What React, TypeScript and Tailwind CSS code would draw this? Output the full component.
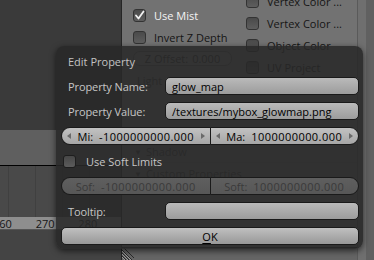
import React from "react";

const Check = () => (
  <svg width="11" height="11" viewBox="0 0 11 11" fill="none">
    <path
      d="M2 5.5 L4.5 8.5 L9.5 1.5"
      stroke="#f2f2f2"
      strokeWidth="1.8"
      strokeLinecap="round"
      strokeLinejoin="round"
    />
  </svg>
);

const Arrow = ({ dir }: { dir: "l" | "r" }) => (
  <svg width="4" height="6" viewBox="0 0 4 6">
    <path d={dir === "l" ? "M4 0 L0 3 L4 6 Z" : "M0 0 L4 3 L0 6 Z"} fill="#6a6a6a" />
  </svg>
);

const PanelCheck = ({
  label,
  checked,
  light,
}: {
  label: string;
  checked?: boolean;
  light?: boolean;
}) => (
  <div className="h-[22px] flex items-center gap-[8px]">
    <div className="w-[13px] h-[13px] rounded-[3px] border border-[#333] bg-gradient-to-b from-[#4a4a4a] to-[#5e5e5e] flex items-center justify-center">
      {checked && <Check />}
    </div>
    <span className={light ? "text-[#f4f4f4]" : "text-[#151515]"}>{label}</span>
  </div>
);

const Row = ({ label, children }: { label: string; children: React.ReactNode }) => (
  <div className="h-[18px] flex items-center">
    <div className="w-[104px] pl-[7px] text-[#c6c6c6] tracking-[-0.1px]">{label}</div>
    {children}
  </div>
);

const TextField = ({ value }: { value?: string }) => (
  <div className="flex-1 h-full rounded-[5px] border border-[#1a1a1a] bg-gradient-to-b from-[#bababa] to-[#9c9c9c] pl-[6px] flex items-center text-black">
    {value}
  </div>
);

const NumHalf = ({
  label,
  value,
  side,
  disabled,
}: {
  label: string;
  value: string;
  side: "l" | "r";
  disabled?: boolean;
}) => (
  <div
    className={
      "flex-1 h-full flex items-center px-[5px] border-y border-[#1a1a1a] " +
      (side === "l"
        ? "rounded-l-[9px] border-l "
        : "rounded-r-[9px] border-r border-l border-l-[#1a1a1a] ") +
      (disabled
        ? "bg-gradient-to-b from-[#5f5f5f] to-[#575757] text-[#3a3a3a]"
        : "bg-gradient-to-b from-[#c2c2c2] to-[#a6a6a6] text-black")
    }
  >
    <div className="w-[4px]">{!disabled && <Arrow dir="l" />}</div>
    <div className="flex-1 flex justify-center gap-[6px]">
      <span>{label}</span>
      <span className="tracking-[0.45px]">{value}</span>
    </div>
    <div className="w-[4px]">{!disabled && <Arrow dir="r" />}</div>
  </div>
);

export default function App() {
  return (
    <div className="relative w-[374px] h-[260px] overflow-hidden flex font-['Open_Sans',sans-serif] text-[11px] leading-none bg-[#3a3a3a]">
      {/* left editors */}
      <div className="w-[122px] flex flex-col border-r border-[#262626]">
        <div className="h-[130px] bg-[#3a3a3a]" />
        <div className="h-[36px] bg-[#5f5f5f] border-b border-black" />
        <div className="h-[51px] bg-[#494949] flex">
          <div className="ml-[8px] w-px bg-[#404040]" />
          <div className="ml-[26px] w-px bg-[#404040]" />
          <div className="ml-[26px] w-px bg-[#404040]" />
          <div className="ml-[26px] w-px bg-[#404040]" />
        </div>
        <div className="h-[12px] bg-[#8e8e8e] flex items-center -ml-[7px] text-[#161616]">
          <span className="w-[48px]">260</span>
          <span className="w-[48px]">270</span>
          <span className="w-[48px]">280</span>
        </div>
        <div className="flex-1 bg-[#444] border-t border-[#555]" />
      </div>

      {/* properties panel */}
      <div className="w-[235px] flex flex-col bg-[#727272]">
        <div className="h-[140px] flex overflow-hidden">
          <div className="w-[124px] pl-[11px] pt-[4px] flex flex-col">
            <PanelCheck label="Use Mist" checked light />
            <PanelCheck label="Invert Z Depth" />
            <div className="mt-[3px] w-[99px] h-[15px] rounded-[7px] border border-[#555] bg-[#7c7c7c] flex items-center justify-center gap-[4px] text-[#2a2a2a]">
              <span>Z Offset:</span>
              <span>0.000</span>
            </div>
            <div className="mt-[9px] pl-[4px] text-[#333]">Light</div>
          </div>
          <div className="flex-1 -mt-[10px] flex flex-col">
            <PanelCheck label="Vertex Color ..." />
            <PanelCheck label="Vertex Color ..." />
            <PanelCheck label="Object Color" />
            <PanelCheck label="UV Project" />
          </div>
        </div>
        <div className="h-[22px] bg-[#6e6e6e] border-t border-[#666] flex items-center pl-[12px] gap-[4px] text-[#333]">
          <span className="text-[8px]">▼</span>
          <span>Shadow</span>
        </div>
        <div className="h-[22px] bg-[#6e6e6e] border-t border-[#666] flex items-center pl-[12px] gap-[4px] text-[#333]">
          <span className="text-[8px]">▼</span>
          <span>Custom Properties</span>
        </div>
        <div className="flex-1" />
        <div className="h-[13px] bg-[#656565] border-t border-[#222] flex">
          <svg width="12" height="12" viewBox="0 0 12 12">
            <path d="M0 2 L10 12 M0 5 L7 12 M0 8 L4 12 M2 0 L12 10" stroke="#2a2a2a" strokeWidth="1" />
            <path d="M0 3 L9 12 M0 6 L6 12 M0 9 L3 12" stroke="#9a9a9a" strokeWidth="1" />
          </svg>
        </div>
      </div>

      {/* right strip */}
      <div className="flex-1 flex border-l border-[#5a5a5a]">
        <div className="w-[8px] bg-[#6f6f6f]" />
        <div className="flex-1 bg-[#606060]" />
      </div>

      {/* Edit Property popup */}
      <div className="absolute left-[56px] top-[46px] w-[307px] h-[203px] rounded-[8px] bg-[rgba(40,40,40,0.87)] shadow-[0_2px_6px_rgba(0,0,0,0.6)] pt-[6px] pl-[5px] pr-[4px] flex flex-col gap-[7px]">
        <div className="h-[18px] flex items-center pl-[7px] text-[#c2c2c2]">Edit Property</div>
        <Row label="Property Name:">
          <TextField value="glow_map" />
        </Row>
        <Row label="Property Value:">
          <TextField value="/textures/mybox_glowmap.png" />
        </Row>
        <div className="h-[18px] flex">
          <NumHalf side="l" label="Mi:" value="-1000000000.000" />
          <NumHalf side="r" label="Ma:" value="1000000000.000" />
        </div>
        <div className="h-[18px] flex items-center pl-[2px] gap-[10px] text-[#c6c6c6]">
          <div className="w-[13px] h-[13px] rounded-[3px] border border-[#1e1e1e] bg-gradient-to-b from-[#474747] to-[#5c5c5c]" />
          <span>Use Soft Limits</span>
        </div>
        <div className="h-[18px] flex">
          <NumHalf side="l" label="Sof:" value="-1000000000.000" disabled />
          <NumHalf side="r" label="Soft:" value="1000000000.000" disabled />
        </div>
        <Row label="Tooltip:">
          <TextField />
        </Row>
        <div className="h-[18px] rounded-[5px] border border-[#1a1a1a] bg-gradient-to-b from-[#c0c0c0] to-[#989898] flex items-center justify-center text-black">
          <span>
            <span className="underline underline-offset-2">O</span>K
          </span>
        </div>
      </div>
    </div>
  );
}
